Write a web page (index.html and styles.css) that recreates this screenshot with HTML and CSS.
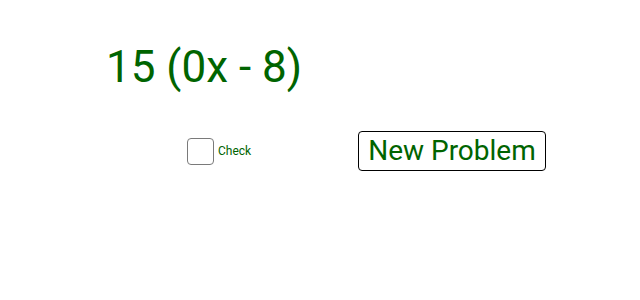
FILE: index.html
```html
<!DOCTYPE html>
<html>
<head>
<meta charset="utf-8">
<link rel="stylesheet" href="styles.css">
</head>
<body>
<div class="page">
  <div class="problem">15 (0x - 8)</div>
  <div class="controls">
    <label class="check">
      <span class="box"></span>
      <span class="check-label">Check</span>
    </label>
    <button class="new-btn">New Problem</button>
  </div>
</div>
</body>
</html>
```
FILE: styles.css
```css
html, body {
  margin: 0;
  padding: 0;
  background: #ffffff;
}
.page {
  width: 640px;
  height: 300px;
  font-family: Roboto, "Liberation Sans", sans-serif;
  color: #006400;
  padding-top: 41px;
  box-sizing: border-box;
}
.problem {
  font-size: 44px;
  line-height: 52px;
  margin-left: 106px;
}
.controls {
  display: flex;
  align-items: center;
  margin-top: 38px;
  height: 40px;
}
.check {
  display: flex;
  align-items: center;
  margin-left: 187px;
}
.box {
  width: 25px;
  height: 25px;
  border: 1px solid #7a7a7a;
  border-radius: 4px;
  background: #fff;
}
.check-label {
  font-size: 12px;
  margin-left: 4px;
}
.new-btn {
  margin-left: 107px;
  font-family: Roboto, "Liberation Sans", sans-serif;
  font-size: 28px;
  color: #006400;
  background: #fff;
  border: 1px solid #000;
  border-radius: 4px;
  height: 40px;
  padding: 0 9px;
  line-height: 1;
}
```
